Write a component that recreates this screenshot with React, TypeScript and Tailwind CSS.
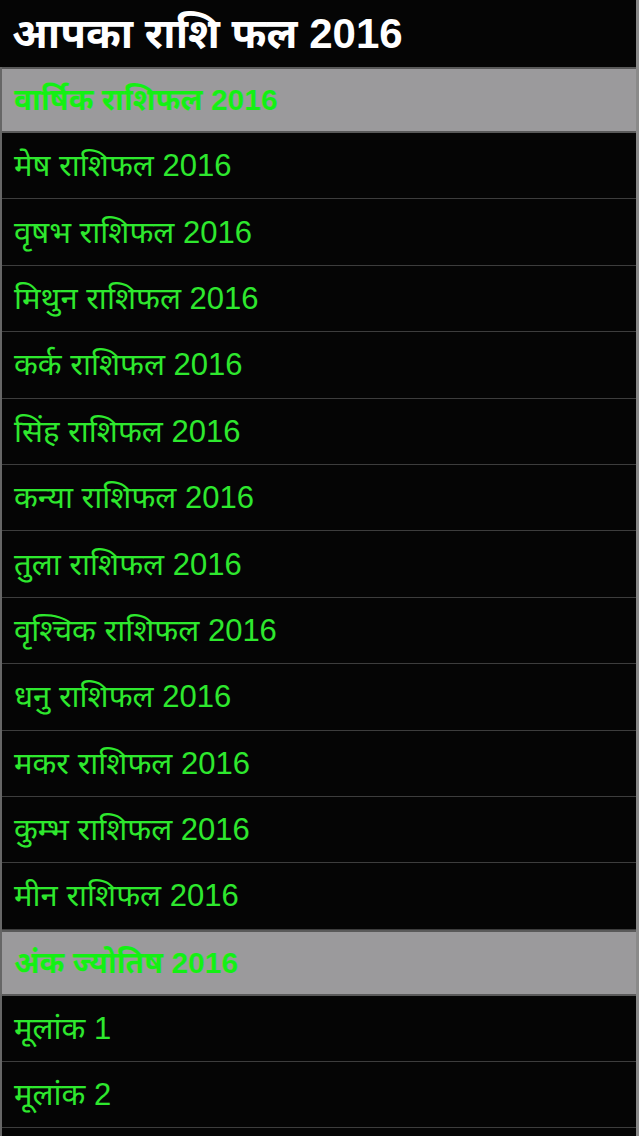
const rashi = [
  "मेष राशिफल 2016",
  "वृषभ राशिफल 2016",
  "मिथुन राशिफल 2016",
  "कर्क राशिफल 2016",
  "सिंह राशिफल 2016",
  "कन्या राशिफल 2016",
  "तुला राशिफल 2016",
  "वृश्चिक राशिफल 2016",
  "धनु राशिफल 2016",
  "मकर राशिफल 2016",
  "कुम्भ राशिफल 2016",
  "मीन राशिफल 2016",
];

const ank = ["मूलांक 1", "मूलांक 2"];

const font = { fontFamily: '"Liberation Sans", "Noto Sans", "DejaVu Sans", sans-serif' };

const SectionHeader = ({ title }: { title: string }) => (
  <div className="h-[66px] shrink-0 flex items-center px-3 bg-[#9b9a9c] border-y-2 border-[#5a5a5a]">
    <span className="text-[30px] font-bold text-[#14f014] leading-none">{title}</span>
  </div>
);

const Row = ({ label }: { label: string }) => (
  <div className="h-[66.4px] shrink-0 flex items-center px-3 border-b border-[#3d3d3d]">
    <span className="text-[31px] text-[#2ee82e] leading-none">{label}</span>
  </div>
);

export default function App() {
  return (
    <div className="w-[639px] h-[1136px] overflow-hidden bg-[#050505] flex flex-col" style={font}>
      {/* Title */}
      <div className="h-[67px] shrink-0 flex items-center px-3 bg-[#050505] border-r-[3px] border-[#8a8a8a]">
        <h1 className="text-[42px] font-bold text-white leading-none">आपका राशि फल 2016</h1>
      </div>

      {/* List */}
      <div className="flex-1 flex flex-col border-l-2 border-r-[3px] border-l-[#666] border-r-[#8a8a8a]">
        <SectionHeader title="वार्षिक राशिफल 2016" />
        {rashi.map((r) => (
          <Row key={r} label={r} />
        ))}
        <SectionHeader title="अंक ज्योतिष 2016" />
        {ank.map((r) => (
          <Row key={r} label={r} />
        ))}
      </div>
    </div>
  );
}
